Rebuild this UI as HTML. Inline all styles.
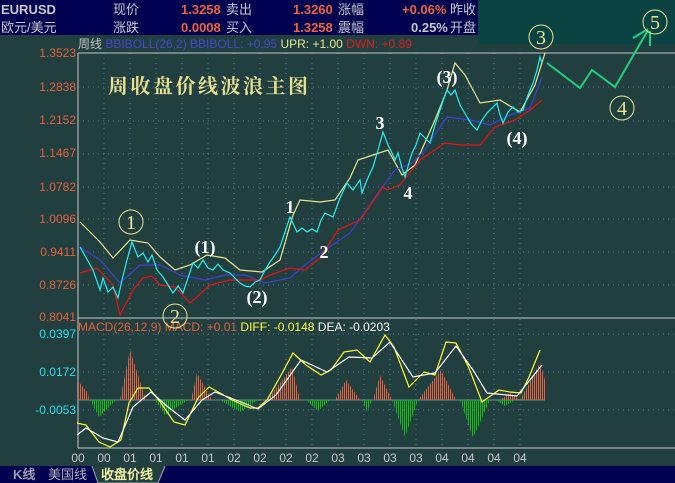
<!DOCTYPE html>
<html><head><meta charset="utf-8"><style>
html,body{margin:0;padding:0;background:#213f3f;width:675px;height:483px;overflow:hidden;position:relative;font-family:"Liberation Sans","WenQuanYi Zen Hei","Noto Sans CJK SC",sans-serif}
.t{position:absolute;white-space:nowrap;font-size:13px;line-height:14px}
.hd{position:absolute;left:0;top:0;width:478px;height:35px;background:#000050}
.rt{position:absolute;left:478px;top:0;width:197px;height:44px;background:#0b4343}
.g{color:#c8c8c8}.o{color:#f06040;font-weight:bold}
.yl{position:absolute;right:599px;font-size:12px;color:#e8603c;line-height:12px}
.ml{position:absolute;right:599px;font-size:12px;color:#20e0f0;line-height:12px}
</style></head><body>
<div class="hd"></div><div class="rt"></div>
<div class="t g" style="left:1px;top:3px;font-weight:bold">EURUSD</div>
<div class="t g" style="left:1px;top:21px">欧元/美元</div>
<div class="t g" style="left:113px;top:3px">现价</div>
<div class="t g" style="left:113px;top:21px">涨跌</div>
<div class="t o" style="left:181px;top:3px">1.3258</div><div class="t g" style="left:226px;top:3px">卖出</div>
<div class="t o" style="left:181px;top:21px">0.0008</div><div class="t g" style="left:226px;top:21px">买入</div>
<div class="t o" style="left:293px;top:3px">1.3260</div><div class="t g" style="left:338px;top:3px">涨幅</div>
<div class="t o" style="left:293px;top:21px">1.3258</div><div class="t g" style="left:338px;top:21px">震幅</div>
<div class="t o" style="left:402px;top:3px">+0.06%</div><div class="t g" style="left:450px;top:3px">昨收</div>
<div class="t g" style="left:411px;top:21px;font-weight:bold">0.25%</div><div class="t g" style="left:450px;top:21px">开盘</div>
<div class="t" style="left:78px;top:37px;font-size:12px;color:#c0c0c0">周线 <span style="color:#4848d0">BBIBOLL(26,2) BBIBOLL: +0.95</span> <span style="color:#e8e890">UPR: +1.00</span> <span style="color:#e02020">DWN: +0.89</span></div>
<div class="yl" style="top:47px">1.3523</div>
<div class="yl" style="top:81px">1.2838</div>
<div class="yl" style="top:114px">1.2152</div>
<div class="yl" style="top:147px">1.1467</div>
<div class="yl" style="top:181px">1.0782</div>
<div class="yl" style="top:213px">1.0096</div>
<div class="yl" style="top:246px">0.9411</div>
<div class="yl" style="top:279px">0.8726</div>
<div class="yl" style="top:311px">0.8041</div>
<div class="t" style="left:78px;top:320px;font-size:12px;color:#e8603c">MACD(26,12,9) MACD: +0.01 <span style="color:#ffff40">DIFF: -0.0148</span> <span style="color:#fff">DEA: -0.0203</span></div>
<div class="ml" style="top:328px">0.0397</div>
<div class="ml" style="top:366px">0.0172</div>
<div class="ml" style="top:404px">-0.0053</div>
<svg width="675" height="483" style="position:absolute;left:0;top:0">
<defs><pattern id="pr" x="0" y="0" width="2" height="4" patternUnits="userSpaceOnUse"><rect width="1" height="4" fill="#e8603c"/></pattern>
<pattern id="pg" x="0" y="0" width="2" height="4" patternUnits="userSpaceOnUse"><rect width="1" height="4" fill="#10c010"/></pattern></defs>
<g stroke="#5878a0" stroke-dasharray="1,4" stroke-width="1">
<path d="M78 87H675M78 121H675M78 154H675M78 187H675M78 219H675M78 252H675M78 285H675M78 334H675M78 372H675M78 410H675"/>
<path d="M104 53V317M130 53V317M156 53V317M182 53V317M208 53V317M234 53V317M260 53V317M286 53V317M312 53V317M338 53V317M364 53V317M390 53V317M416 53V317M442 53V317M468 53V317M494 53V317M520 53V317M104 319V448M130 319V448M156 319V448M182 319V448M208 319V448M234 319V448M260 319V448M286 319V448M312 319V448M338 319V448M364 319V448M390 319V448M416 319V448M442 319V448M468 319V448M494 319V448M520 319V448"/>
</g>
<path d="M78 53H675M78 53V448M78 318H675M78 448H675" stroke="#c8c8c8" fill="none"/>
<path d="M78 400H545" stroke="#6a8a9a"/>
<g fill="none" stroke-width="1.2">
<polyline stroke="#e8e890" points="80,222 100,242 113,258 130,240 148,243 160,257 175,270 190,265 207,255 225,258 240,270 262,272 280,260 293,215 300,200 320,202 335,200 350,178 358,160 373,155 388,150 402,175 415,165 435,120 447,90 455,63 465,75 480,103 500,100 520,112 535,85 545,53"/>
<polyline stroke="#4040d0" points="80,247 100,260 120,283 140,265 160,265 180,275 205,280 225,275 245,275 265,283 290,278 305,265 325,250 350,233 370,205 380,190 395,170 412,163 425,150 447,117 470,120 490,125 510,115 530,108 542,77"/>
<polyline stroke="#f01010" points="80,273 97,268 113,285 120,315 133,290 143,278 152,276 160,285 175,287 190,303 210,285 230,280 260,280 270,275 290,268 305,270 320,258 338,230 360,220 383,187 387,190 400,185 420,160 445,143 460,145 480,145 495,127 515,120 530,110 542,100"/>
<polyline stroke="#20f0f0" points="80,247 93,270 100,290 103,278 108,292 113,287 118,298 122,280 127,260 132,242 138,257 143,253 148,262 152,255 157,270 163,277 168,285 173,293 178,286 183,293 188,278 193,263 198,268 203,260 208,268 213,270 218,264 223,270 230,273 235,278 240,283 245,286 250,287 255,282 260,280 265,270 270,262 275,255 280,247 285,232 290,217 297,232 302,228 307,232 312,229 317,232 321,220 325,213 333,217 340,198 347,183 353,190 360,180 362,193 367,180 373,167 378,150 383,132 388,145 392,153 395,160 398,153 402,168 405,177 409,163 412,153 416,145 420,133 425,138 430,143 435,125 440,110 444,98 447,90 451,95 455,90 460,105 467,117 472,125 477,130 482,120 487,113 492,108 497,103 500,115 503,123 508,112 513,107 518,112 523,110 528,95 533,83 537,70 540,57 542,63"/>
</g>
<g fill="none" stroke="#20d080" stroke-width="2"><polyline points="547,63 580,88 592,70 615,87 648,30"/><path d="M633,38 L648,29 M650,46 L650,31"/></g>
<g fill="none" stroke="#e8e890" stroke-width="1"><circle cx="131" cy="222" r="12"/><circle cx="175" cy="316" r="12"/><circle cx="541" cy="37" r="12"/><circle cx="655" cy="22" r="12"/><circle cx="622" cy="108" r="12"/></g>
<g font-family="Liberation Serif,serif" font-size="20" fill="#e8e890" text-anchor="middle"><text x="131" y="229">1</text><text x="175" y="323">2</text><text x="541" y="44">3</text><text x="655" y="29">5</text><text x="622" y="115">4</text></g>
<g font-family="Liberation Serif,serif" font-size="18" font-weight="bold" fill="#ffffff" text-anchor="middle"><text x="290" y="213">1</text><text x="324" y="258">2</text><text x="380" y="129">3</text><text x="408" y="199">4</text><text x="205" y="253">(1)</text><text x="257" y="303">(2)</text><text x="447" y="83">(3)</text><text x="517" y="144">(4)</text></g>
<text x="108" y="93" font-family="Liberation Serif,'Noto Serif CJK SC',serif" font-size="20" font-weight="bold" fill="#e8e090" letter-spacing="2.5">周收盘价线波浪主图</text>
<g>
<polygon fill="url(#pr)" points="78,400 78,381 88,393 89,400"/>
<polygon fill="url(#pr)" points="120,400 130,350 146,400"/>
<polygon fill="url(#pr)" points="191,400 197,373 212,400"/>
<polygon fill="url(#pr)" points="267,400 292,367 300,400"/>
<polygon fill="url(#pr)" points="335,400 346,380 360,400"/>
<polygon fill="url(#pr)" points="373,400 380,375 392,400"/>
<polygon fill="url(#pr)" points="418,400 441,370 456,400"/>
<polygon fill="url(#pr)" points="500,400 510,393 520,400"/>
<polygon fill="url(#pr)" points="520,400 540,363 545,380 545,400"/>
<polygon fill="url(#pg)" points="90,400 99,417 116,400"/>
<polygon fill="url(#pg)" points="155,400 165,415 188,400"/>
<polygon fill="url(#pg)" points="220,400 240,412 258,400"/>
<polygon fill="url(#pg)" points="306,400 318,411 330,400"/>
<polygon fill="url(#pg)" points="362,400 367,412 372,400"/>
<polygon fill="url(#pg)" points="392,400 405,437 418,400"/>
<polygon fill="url(#pg)" points="460,400 473,438 490,400"/>
<polygon fill="url(#pg)" points="495,400 505,406 515,400"/>
</g>
<g fill="none" stroke-width="1.2">
<polyline stroke="#ffff30" points="77,423 86,425 99,442 110,447 121,440 129,403 138,388 149,388 161,403 174,422 185,425 198,398 209,387 220,393 232,400 250,408 258,408 267,400 280,377 293,353 306,365 321,375 331,370 344,352 357,350 370,362 385,335 394,347 409,387 424,372 435,375 446,342 456,343 469,368 482,402 499,390 510,392 521,393 529,377 540,350"/>
<polyline stroke="#ffffff" points="77,435 86,428 103,438 118,442 133,407 151,392 168,407 185,420 202,400 215,392 241,402 258,409 276,395 301,360 327,372 349,357 372,358 390,342 413,377 435,373 456,346 473,370 487,393 517,396 542,365"/>
</g>
<g font-family="Liberation Sans,sans-serif" font-size="12" fill="#c8c8c8" text-anchor="middle">
<text x="78" y="462">00</text><text x="104" y="462">00</text><text x="130" y="462">01</text><text x="156" y="462">01</text><text x="182" y="462">01</text><text x="208" y="462">01</text><text x="234" y="462">02</text><text x="260" y="462">02</text><text x="286" y="462">02</text><text x="312" y="462">02</text><text x="338" y="462">03</text><text x="364" y="462">03</text><text x="390" y="462">03</text><text x="416" y="462">03</text><text x="442" y="462">04</text><text x="468" y="462">04</text><text x="494" y="462">04</text><text x="520" y="462">04</text>
</g>
<rect x="0" y="466" width="675" height="17" fill="#000050"/>
<path d="M92,466 L98,483 L158,483 L165,466" fill="#213f3f" stroke="#9aa" stroke-width="1"/>
<g font-family="Liberation Sans,'WenQuanYi Zen Hei',sans-serif" font-size="13" font-weight="bold"><text x="13" y="479" fill="#9a9aa8">K线</text><text x="48" y="479" fill="#b0b0b8" font-weight="normal">美国线</text><text x="101" y="479" fill="#f0f0a0">收盘价线</text></g>
</svg>
</body></html>
